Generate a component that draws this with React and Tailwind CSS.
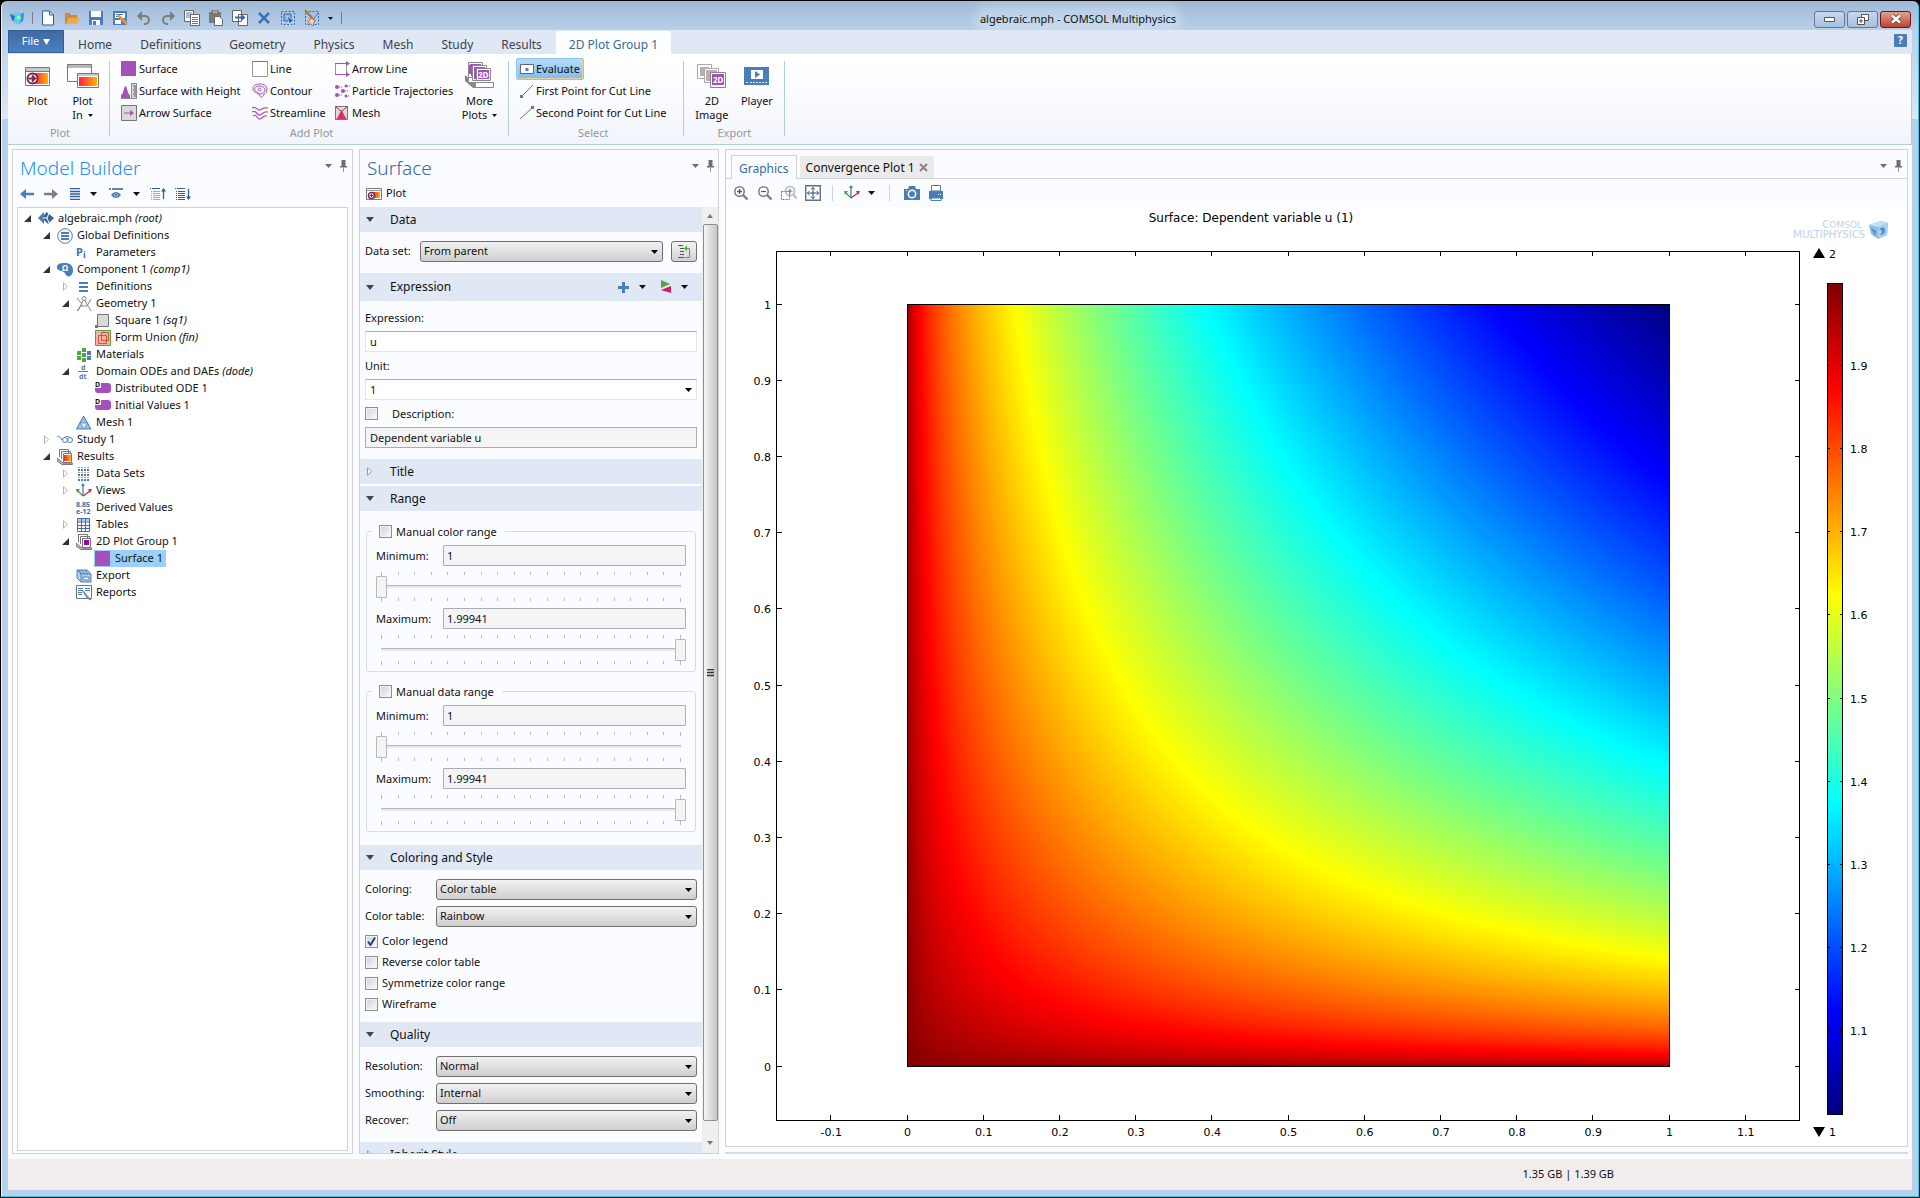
import React from "react";

/* ---------- colour map and surface geometry ---------- */

const STOPS = [
  [0, 0, 0, 128],
  [0.125, 0, 0, 255],
  [0.375, 0, 255, 255],
  [0.625, 255, 255, 0],
  [0.875, 255, 0, 0],
  [1, 128, 0, 0],
];

function rainbow(t) {
  let i = 0;
  while (i < STOPS.length - 2 && t > STOPS[i + 1][0]) i++;
  const [a, ...ca] = STOPS[i];
  const [b, ...cb] = STOPS[i + 1];
  const k = (t - a) / (b - a);
  return "rgb(" + ca.map((c, j) => Math.round(c + (cb[j] - c) * k)).join(",") + ")";
}

const X0 = 907.5, X1 = 1669.5, Y0 = 1066.5, Y1 = 304.5;
const px = (x) => X0 + (X1 - X0) * x;
const py = (y) => Y0 - (Y0 - Y1) * y;

// Region where u = 2 - sqrt(xy) lies below a level, bounded by a hyperbola.
function levelPath(c) {
  const n = 48;
  const pts = [];
  for (let i = 0; i <= n; i++) {
    const x = Math.pow(c, 1 - i / n);
    pts.push(px(x).toFixed(2) + " " + py(c / x).toFixed(2));
  }
  return "M" + pts.join("L") + "L" + px(1) + " " + py(1) + "Z";
}

const LEVELS = Array.from({ length: 320 }, (_, i) => {
  const t = 1 - (i + 1) / 321;
  return { d: levelPath((1 - t) * (1 - t)), fill: rainbow(t) };
});

const tenth = (i) => String(Math.round(i) / 10);

function SurfacePlot() {
  const xs = Array.from({ length: 13 }, (_, i) => i - 1);
  const ys = Array.from({ length: 11 }, (_, i) => i);
  const ls = Array.from({ length: 9 }, (_, i) => i + 11);
  return (
    <svg viewBox="726 207 1181 939" className="block min-h-0 w-full flex-1 bg-white font-['DejaVu_Sans',sans-serif] text-[11px]" role="img" aria-label="Surface plot">
      <defs>
        <linearGradient id="legend" x1="0" y1="1" x2="0" y2="0">
          {STOPS.map((s) => <stop key={s[0]} offset={s[0]} stopColor={rainbow(s[0])} />)}
        </linearGradient>
      </defs>
      <text x="1251" y="222" textAnchor="middle" className="text-[12px]">Surface: Dependent variable u (1)</text>
      <rect x={X0} y={Y1} width={X1 - X0} height={Y0 - Y1} fill="rgb(136,0,0)" />
      {LEVELS.map((l) => <path key={l.fill + l.d.length + l.d.slice(0, 24)} d={l.d} fill={l.fill} />)}
      <g fill="none" stroke="#000">
        <rect x={X0} y={Y1} width={X1 - X0} height={Y0 - Y1} />
        <rect x="776.5" y="251.5" width="1023" height="869" />
        {xs.map((i) => {
          const x = Math.round(X0 + 76.2 * i) - 0.5;
          return <path key={i} d={`M${x} 251v5M${x} 1121v-6`} />;
        })}
        {ys.map((i) => {
          const y = Math.round(Y0 - 76.2 * i) - 0.5;
          return <path key={i} d={`M776 ${y}h6M1800 ${y}h-5`} />;
        })}
        <rect x="1827.5" y="283.5" width="15" height="831" fill="url(#legend)" />
        {ls.map((i) => {
          const y = Math.round(1114.5 - 83.2 * (i - 10)) - 0.5;
          return <path key={i} d={`M1828 ${y}h2M1842 ${y}h-2`} />;
        })}
      </g>
      {xs.map((i) => <text key={i} x={X0 + 76.2 * i} y="1136" textAnchor="middle">{tenth(i)}</text>)}
      {ys.map((i) => <text key={i} x="771" y={Y0 - 76.2 * i + 4} textAnchor="end">{tenth(i)}</text>)}
      {ls.map((i) => <text key={i} x="1850" y={1118.5 - 83.2 * (i - 10)}>{tenth(i)}</text>)}
      <path d="M1819 248l6 10h-12z" />
      <text x="1829" y="258">2</text>
      <path d="M1819 1137l6-10h-12z" />
      <text x="1829" y="1136">1</text>
      <g fill="#bcd3ec">
        <text x="1862" y="228" textAnchor="end" className="text-[10px]">C<tspan className="text-[9px]">OMSOL</tspan></text>
        <text x="1865" y="238" textAnchor="end" className="text-[11px]">M<tspan className="text-[10px]">ULTIPHYSICS</tspan></text>
        <path d="M1869 225l12-4 7 2-1 12-9 4-7-5z" fill="#8dbce4" />
        <path d="M1869 225l9 2 10-4-7-2z" fill="#c6dff4" />
        <path d="M1878 227l10-4-1 12-9 4z" fill="#a9cfee" />
        <path d="M1871 228l5 3-1 5zM1879 229q6-4 6 1t-5 5q3-3 1-5z" fill="#4c8fc9" />
      </g>
    </svg>
  );
}

/* ---------- icons ---------- */

const B = "#4a7ebb", P = "#a551bb", G = "#7f7f7f";

function Svg({ w = 16, h = 16, children }) {
  return <svg width={w} height={h} viewBox={`0 0 ${w} ${h}`} fill="none" className="block shrink-0" aria-hidden="true">{children}</svg>;
}

const Caret = ({ color = "#111" }) => <Svg w={7} h={4}><path d="M0 0h7L3.500 4z" fill={color} /></Svg>;
const Pin = () => <Svg w={7} h={12}><path d="M1.500 0h4v6H7v1.500H0V6h1.500z" fill="#6e6e6e" /><path d="M3.500 7v5" stroke="#999" /></Svg>;

const icons = {
  app: <Svg><path d="M1 4l7-2 7 1-1 8-5 4-6-4z" fill="#7cc0ea" /><path d="M1 4l5 2-1 5-2-1z" fill="#2d6fb5" /><path d="M12 4l3-1-1 8-3 2z" fill="#3f8ccb" /><circle cx="9" cy="8" r="3.500" fill="#2fe3f0" /><circle cx="9.500" cy="7.500" r="1.700" fill="#c9ef6b" /></Svg>,
  newFile: <Svg><path d="M2.500 1h7l4 4v10h-11z" fill="#fff" stroke="#2f5f9e" /><path d="M9.500 1v4h4" stroke="#2f5f9e" /></Svg>,
  open: <Svg><path d="M1 3h5l1 2h6v3H5l-3 6H1z" fill="#cf8a36" /><path d="M4.500 8H16l-3.500 6H1.500z" fill="#f0a94e" /></Svg>,
  save: <Svg><path d="M1 1h14v14H1z" fill={B} /><path d="M3 1h10v6H3zM4 10h8v5H4z" fill="#fff" /><path d="M5 11h3v4H5z" fill={B} /></Svg>,
  saveAs: <Svg><path d="M1 1h14v14H1z" fill={B} /><path d="M3 3h10v5H3zM3 10h6v4H3z" fill="#fff" /><path d="M4 4.500h7M4 6.500h5" stroke={B} /><path d="M6 5l9 9" stroke="#e8973a" strokeWidth="2.500" /></Svg>,
  undo: <Svg><path d="M3 6h6a4 4 0 010 8H8" stroke="#7c7c7c" strokeWidth="2" /><path d="M6 1L1 6l5 5z" fill="#7c7c7c" /></Svg>,
  redo: <Svg><path d="M13 6H7a4 4 0 000 8h1" stroke="#7c7c7c" strokeWidth="2" /><path d="M10 1l5 5-5 5z" fill="#7c7c7c" /></Svg>,
  copy: <Svg><path d="M.5.500h9v11h-9z" fill="#fff" stroke="#666" /><path d="M2 3h6M2 5h6M2 7h6" stroke={B} /><path d="M6.500 4.500h9v11h-9z" fill="#fff" stroke="#666" /><path d="M8 7.500h6M8 9.500h6M8 11.500h6M8 13.500h6" stroke={B} /></Svg>,
  paste: <Svg><path d="M1 2h12v11H1z" fill="#7b7b7b" /><path d="M4 0h6v4H4z" fill="#a8a8a8" stroke="#666" /><path d="M6.500 6.500h5l3 3v6h-8z" fill="#fff" stroke="#666" /></Svg>,
  duplicate: <Svg><path d="M.5.500h9v11h-9zM6.500 4.500h9v11h-9z" fill="#fff" stroke="#666" /><path d="M3 7.500h8" stroke="#2f6db8" strokeWidth="2" /><path d="M9.500 4l4 3.500-4 3.500z" fill="#2f6db8" /></Svg>,
  del: <Svg><path d="M3 3l10 10M13 3L3 13" stroke="#3c72b3" strokeWidth="2.500" /></Svg>,
  select: <Svg><path d="M1.500 1.500h13v13h-13z" stroke="#2f6db8" strokeDasharray="2 1.500" /><path d="M4 4h7v7H4z" fill="#8fb6de" stroke="#2f6db8" /><path d="M7 6l7 5-3 1-1 3z" fill="#1f5aa0" stroke="#fff" strokeWidth=".5" /></Svg>,
  clear: <Svg><path d="M1.500 1.500h13v13h-13z" stroke="#2f6db8" strokeDasharray="2 1.500" /><path d="M1 0l8 9" stroke="#b1703a" strokeWidth="2" /><path d="M7 8l4 2-2 6-5-4z" fill="#e9d5c0" stroke="#b1703a" /><path d="M14 3l-5 7" stroke={B} /></Svg>,
  plot: <Svg w={25} h={19}><path d="M.5.500h24v18H.500z" fill="#fff" stroke="#777" /><path d="M1 1h23v3H1z" fill="#c9c9c9" /><path d="M1 4.500h23" stroke="#777" /><path d="M9 6h14v11H9z" fill="url(#heat)" /><circle cx="7.500" cy="11.500" r="5" fill="#fff" stroke="#7a2450" strokeWidth="2" /><path d="M4 11.500h5M7 8.500l3 3-3 3" stroke="#7a2450" strokeWidth="2" /></Svg>,
  plotSmall: <Svg w={16} h={12}><path d="M.5.500h15v11H.500z" fill="#fff" stroke="#777" /><path d="M1 2.500h14" stroke="#999" /><path d="M7 4h7v6H7z" fill="url(#heat)" /><circle cx="5.500" cy="7.500" r="3" fill="#fff" stroke="#7a2450" strokeWidth="1.500" /><path d="M4 7.500h3.500M5.500 6v3" stroke="#7a2450" /></Svg>,
  plotIn: <Svg w={32} h={24}><path d="M.5.500h24v17H.500z" fill="#fff" stroke="#777" /><path d="M1 1h23v3H1z" fill="#b9b9b9" /><path d="M10.500 9.500h21v14h-21z" fill="#fff" stroke="#777" /><path d="M11 10h20v2H11z" fill="#c9c9c9" /><path d="M12 13h18v9H12z" fill="url(#heat)" /></Svg>,
  surface: <Svg><path d="M0 0h15v15H0z" fill={P} /></Svg>,
  surfaceHeight: <Svg><path d="M0 15v-3c2-1 2-3 3-6 1-4 2-4 3 0 1 3 1 5 3 6v3z" fill={P} /><path d="M0 15.500h16" stroke="#888" /><path d="M10.500.500h5v15h-5z" fill="#ddd" stroke="#888" /><path d="M12 3h3M13 5h2M12 7h3M13 9h2M12 11h3M13 13h2" stroke="#555" /></Svg>,
  arrowSurface: <Svg><path d="M.5.500h15v15H.500z" fill="#d9d9d9" stroke="#777" /><path d="M3 8h8" stroke={P} /><path d="M9 5l4 3-4 3z" fill={P} /></Svg>,
  line: <Svg><path d="M.5.500h15v15H.500z" fill="#fff" stroke="#999" /><path d="M.5 0v.500h15" stroke={P} /></Svg>,
  contour: <Svg><path d="M8 1c4 0 7 2 7 5s-1 4-3 5c-1 3-3 4-4 2 0-3-7-3-7-7s3-5 7-5z" stroke={P} /><path d="M7 3c3 0 6 1 6 4s-3 3-4 4-5-2-6-4 1-4 4-4z" stroke={P} /><circle cx="7.500" cy="6.500" r="1.500" stroke={P} /></Svg>,
  streamline: <Svg><path d="M0 3c4-3 5 3 8 2s3-3 8-2M0 7c4-3 5 4 8 3s3-4 8-3M1 11c4-3 4 4 7 3s3-4 7-3" stroke={P} strokeWidth="1.200" /></Svg>,
  arrowLine: <Svg><path d="M1.500 2.500h11v11h-11z" fill="#fff" stroke="#999" /><path d="M1 2.500h12M1 13.500h12" stroke={P} /><path d="M12 0l4 2.500L12 5zM12 11l4 2.500-4 2.500z" fill={P} /></Svg>,
  particle: <Svg><g fill={P}><circle cx="3" cy="4" r="2" /><circle cx="9" cy="8" r="2" /><circle cx="3" cy="12" r="2" /><circle cx="12" cy="3" r="1.500" /><circle cx="12" cy="13" r="1.500" /></g><path d="M5 4h3M11 8h3M5 12h3M13 3h3M14 13h2" stroke={P} strokeDasharray="1 1" /></Svg>,
  mesh: <Svg><path d="M1.500 1.500h12v13h-12z" fill="#ddd" stroke="#777" /><path d="M7.500 5l5 9h-10z" fill="#e6336b" /><path d="M1.500 1.500l6 5 6-5M7.500 6v8" stroke="#b02a55" /></Svg>,
  morePlots: <Svg w={30} h={28}><path d="M0 13l4 3v4h6v6H8l-8-7z" fill="#8a8a8a" /><path d="M3.500.500h14v15h-14z" fill="#fff" stroke="#888" /><path d="M5 2h11v3H5z" fill={P} /><path d="M5 3v9M7 5v9" stroke={P} strokeWidth="2" /><path d="M7.500 3.500h14v15h-14z" fill="#fff" stroke="#888" /><path d="M9 5h11v12H9z" fill={P} /><path d="M11.500 6.500h14v12h-14z" fill="#fff" stroke="#888" /><path d="M13 8h11v9H13z" fill={P} /><text x="13" y="16" fill="#fff" className="text-[8px] font-bold">2D</text><path d="M10.500 20.500h18v5h-18z" fill="#fff" stroke="#888" /></Svg>,
  image2d: <Svg w={30} h={24}><path d="M.5.500h14v14H.500z" fill="#fff" stroke="#b5a5ab" /><path d="M3 3h9v9H3z" fill="#b2b2b2" /><path d="M7.500 4.500h14v14h-14z" fill="#fff" stroke="#b5a5ab" /><path d="M9 6h11v11H9z" fill="#b2b2b2" /><path d="M13.500 8.500h15v15h-15z" fill="#fff" stroke="#888" /><path d="M15 10h12v11H15z" fill={P} /><text x="16" y="19" fill="#fff" className="text-[8px] font-bold">2D</text></Svg>,
  player: <Svg w={25} h={18}><path d="M0 0h25v18H0z" fill={B} /><path d="M7 3h12v9H7z" fill="#fff" /><path d="M11 4l5 3.500-5 3.500z" fill={B} /><path d="M2 15.500h3M6 15.500h17" stroke="#dbe7f4" strokeDasharray="2 1" /></Svg>,
  evaluate: <Svg w={14} h={12}><path d="M.5 1.500h13v9H.500z" fill="#fff" stroke="#666" /><path d="M5.500 5h3v3h-3z" fill={B} /></Svg>,
  firstPoint: <Svg w={14} h={14}><path d="M2 12L13 1" stroke="#777" /><path d="M0 11h3v3H0z" fill={B} /></Svg>,
  secondPoint: <Svg w={14} h={14}><path d="M0 13L12 2" stroke="#777" /><path d="M11 0h3v3h-3z" fill={B} /></Svg>,
  back: <Svg w={14} h={10}><path d="M4 5h10" stroke={B} strokeWidth="2.500" /><path d="M6 0v10L0 5z" fill={B} /></Svg>,
  forward: <Svg w={14} h={10}><path d="M0 5h10" stroke={G} strokeWidth="2.500" /><path d="M8 0v10l6-5z" fill={G} /></Svg>,
  list: <Svg w={10} h={12}><path d="M0 .5h10M0 3.500h10M0 6h10M0 8.500h10M0 11.500h10" stroke="#2f5f9e" strokeWidth="1.300" /></Svg>,
  eye: <Svg w={14} h={12}><path d="M0 1h2M3 1h11" stroke="#2f5f9e" strokeWidth="1.500" /><path d="M2 7c3-4 7-4 10 0-3 4-7 4-10 0z" fill={B} /><circle cx="7" cy="7" r="1.600" fill="#fff" /><circle cx="7" cy="7" r=".9" fill="#24477a" /></Svg>,
  collapse: <Svg w={16} h={12}><path d="M0 .5h1M2 .5h8" stroke="#2f5f9e" /><path d="M1 3.500h1M3 3.500h7M1 5.500h1M3 5.500h7M1 7.500h1M3 7.500h7M1 9.500h1M3 9.500h7M1 11.500h1M3 11.500h7" stroke="#aaa" /><path d="M13.500 1v10" stroke="#2f5f9e" strokeWidth="1.300" /><path d="M11 3.500L13.500 0 16 3.500z" fill="#2f5f9e" /></Svg>,
  expand: <Svg w={16} h={12}><path d="M0 .5h1M2 .5h8M1 3.500h1M3 3.500h7M1 5.500h1M3 5.500h7M1 7.500h1M3 7.500h7M1 9.500h1M3 9.500h7M1 11.500h1M3 11.500h7" stroke="#2f5f9e" /><path d="M13.500 1v10" stroke="#2f5f9e" strokeWidth="1.300" /><path d="M11 8.500l2.500 3.500L16 8.500z" fill="#2f5f9e" /></Svg>,
  root: <Svg><path d="M6 1l-6 6 6 6z" fill={B} /><path d="M8.500 1L16 7l-6 6-6-6z" fill="#3a649f" /><path d="M4.500 7H9M9 7l2-5M9 7l2 5" stroke="#fff" /></Svg>,
  globalDefs: <Svg><circle cx="8" cy="8" r="7.300" fill="#fff" stroke={B} /><path d="M4 5h8M4 8h8M4 11h8" stroke={B} strokeWidth="1.800" /></Svg>,
  params: <Svg><text x="0" y="11" fill="#3f6cab" className="text-[11px] font-bold">P</text><text x="7" y="13" fill="#3f6cab" className="text-[9px] font-bold">i</text></Svg>,
  component: <Svg><path d="M0 5c0-4 5-4 8-4s8 1 8 7-5 8-7 5-1-3-5-4-4-3-4-4z" fill={B} /><text x="5" y="9" fill="#fff" className="text-[8px] font-bold">Ω</text></Svg>,
  definitions: <Svg><path d="M3 4h9M3 8h9M3 12h9" stroke={B} strokeWidth="2" /></Svg>,
  geometry: <Svg><path d="M1 2l5 6-5 7M7.500 4L2 15M8.500 4L15 15M4 10h7L15 3" stroke="#888" /><circle cx="8" cy="2.500" r="2" fill="#fff" stroke="#888" /></Svg>,
  square: <Svg><path d="M2.500 1.500h11v12h-11z" fill="#d9d9d9" stroke="#777" /><path d="M0 12h3v3H0z" fill="#c5573f" /></Svg>,
  union: <Svg><path d="M.5.500h15v15H.500z" fill="#eeb4a4" stroke="#4fa63f" /><path d="M3.500 5.500h8v8h-8zM6.500 2.500h7v8h-7z" stroke="#d4553b" /></Svg>,
  materials: <Svg><g fill="#53a447"><path d="M1 4h4v4H1zM1 9h4v4H1zM6 1h4v4H6zM6 6h4v4H6zM6 11h4v4H6z" /></g><path d="M11 4h4v4h-4zM11 9h4v4h-4z" fill={B} /></Svg>,
  ddt: <Svg><text x="5" y="6" fill={B} className="text-[7px] font-bold">d</text><path d="M2 7.500h10" stroke={B} /><text x="3" y="15" fill={B} className="text-[7px] font-bold">dt</text></Svg>,
  ode: <Svg><path d="M6 2h7q3 0 3 3v4q0 3-3 3H3q-3 0-3-3V7h6z" fill={P} /><text x="0" y="6" fill="#111" className="text-[7px] font-bold">D</text></Svg>,
  meshTri: <Svg><path d="M7.500 1L15 14H.500z" fill="#9fbfe0" stroke={B} /><path d="M4 8h7.500L8 14z" fill="#dfeaf5" stroke={B} strokeWidth=".7" /></Svg>,
  study: <Svg><path d="M0 5c2-2 3 0 5 3" stroke={B} /><circle cx="8" cy="8" r="2.500" stroke={B} /><circle cx="13" cy="8" r="2.500" stroke={B} /><path d="M8 5.500c2-2 4-1 5 0" stroke={B} /></Svg>,
  results: <Svg><path d="M2.500 8V.500h9V4M4.500 10V2.500h9V4" stroke="#777" /><path d="M6.500 4.500h8v9h-8z" fill="#fff" stroke="#777" /><path d="M7 6h7v6H7z" fill="url(#heat)" /><path d="M0 9l6 5h9.500v1.500H5L0 12z" fill="#bbb" stroke="#777" /></Svg>,
  plotGroup: <Svg><path d="M2.500 8V.500h9V4M4.500 10V2.500h9V4" stroke="#777" /><path d="M6.500 4.500h8v9h-8z" fill="#fff" stroke="#777" /><path d="M8 6h5v5H8z" fill="#a000a8" /><path d="M0 9l6 5h9.500v1.500H5L0 12z" fill="#bbb" stroke="#777" /></Svg>,
  dataSets: <Svg><path d="M2 1.500h12M2 6.500h12M2 11.500h12" stroke="#aaa" strokeDasharray="2 1" /><path d="M2 4h12M2 9h12M2 14h12" stroke={B} strokeWidth="2" strokeDasharray="2 1" /></Svg>,
  views: <Svg><path d="M7 1v12" stroke={B} strokeWidth="1.300" /><path d="M7 13L2 8" stroke="#4a9e3b" strokeWidth="1.300" /><path d="M7 13l7-5" stroke="#d4224f" strokeWidth="1.300" /><path d="M5 3l2-3 2 3z" fill={B} /><path d="M0 6l4 0-3 4z" fill="#4a9e3b" /><path d="M12 6h4l-2 4z" fill="#d4224f" /></Svg>,
  derived: <Svg><text x="0" y="7" fill="#3f6cab" className="text-[7px] font-bold">8.85</text><text x="0" y="14" fill="#3f6cab" className="text-[7px] font-bold">e-12</text></Svg>,
  tables: <Svg><path d="M1.500 1.500h12v13h-12z" fill="#fff" stroke="#3f6cab" /><path d="M2 2h11v2.500H2z" fill="#b7cfe8" /><path d="M1 5h13M1 8.500h13M1 11.500h13M5.500 1v14M9.500 1v14" stroke="#3f6cab" /></Svg>,
  exportIcon: <Svg><path d="M1 2h10l4 4v8H5L1 10z" fill="#b7cfe8" stroke={B} /><path d="M5 6h10M5 6v8M1 2l4 4M3 2l3 4M6 2l3 4M9 2l3 4" stroke={B} /><path d="M7 9h6v3H7z" fill="#fff" stroke={B} /></Svg>,
  reports: <Svg><path d="M.5.500h15v13H.500z" fill="#fff" stroke="#777" /><path d="M2 3.500h5M2 5.500h5M2 7.500h4M2 9.500h4M9 3.500h5M9 5.500h5" stroke={B} /><path d="M7 6l8 9-4-2z" fill="#9fbfe0" stroke={B} /></Svg>,
  zoomIn: <Svg><circle cx="6.500" cy="6.500" r="4.700" fill="#fff" stroke={G} strokeWidth="1.600" /><path d="M10 10l4.500 4.500" stroke={G} strokeWidth="2.400" /><path d="M4 6.500h5M6.500 4v5" stroke="#2f5f9e" strokeWidth="1.300" /></Svg>,
  zoomOut: <Svg><circle cx="6.500" cy="6.500" r="4.700" fill="#fff" stroke={G} strokeWidth="1.600" /><path d="M10 10l4.500 4.500" stroke={G} strokeWidth="2.400" /><path d="M4 6.500h5" stroke="#2f5f9e" strokeWidth="1.300" /></Svg>,
  zoomBox: <Svg><circle cx="9" cy="6" r="4.500" fill="#fff" stroke="#b8b8b8" strokeWidth="1.600" /><path d="M12.500 9.500l3 4" stroke="#b8b8b8" strokeWidth="2" /><path d="M.5 6.500h8v8h-8z" stroke={B} strokeDasharray="2 1" /><path d="M6.500 6h5M9 3.500v5" stroke={B} /></Svg>,
  extents: <Svg><path d="M.7.700h14.600v14.600H.700z" fill="#fff" stroke="#6e6e6e" strokeWidth="1.400" /><path d="M5 8h6M8 5v6" stroke="#444" /><path d="M8 1.500l2.500 3h-5zM8 14.500l2.500-3h-5zM1.500 8l3-2.500v5zM14.500 8l-3-2.500v5z" fill={B} /></Svg>,
  camera: <Svg><path d="M0 4h4l1-3h6l1 3h4v11H0z" fill={B} /><circle cx="8" cy="9" r="3.700" fill={B} stroke="#fff" strokeWidth="1.500" /><path d="M2 5.500h1" stroke="#fff" /></Svg>,
  print: <Svg><path d="M3.500.500h9V6h-9z" fill="#fff" stroke={B} /><path d="M1 6h14v8H1z" fill={B} /><path d="M3 13h10v2.500H3z" fill="#fff" stroke={B} /><path d="M10 9.500h1M12 9.500h1" stroke="#fff" /></Svg>,
  plus: <Svg w={11} h={11}><path d="M5.500 0v11M0 5.500h11" stroke={B} strokeWidth="3" /></Svg>,
  swap: <Svg w={10} h={14}><path d="M0 0l9 4-9 4z" fill="#4fa63f" /><path d="M10 6v7L0 10z" fill="#d81b60" /></Svg>,
  goto: <Svg w={14} h={15}><path d="M1 1.500h5M3 4.500h4M3 7.500h4M3 10.500h4M1 13.500h6" stroke="#555" /><path d="M8 13.500h4.500v-9H9" stroke="#53a447" /><path d="M7 4.500l3-3v6z" fill="#53a447" /></Svg>,
};

/* ---------- window chrome ---------- */

function IconButton({ label, icon, className = "" }) {
  return <button type="button" aria-label={label} className={"flex shrink-0 items-center justify-center " + className}>{icon}</button>;
}

function TitleBar() {
  const quick = [["New", "newFile"], ["Open", "open"], ["Save", "save"], ["Save as", "saveAs"], ["Undo", "undo"], ["Redo", "redo"], ["Copy", "copy"], ["Paste", "paste"], ["Duplicate", "duplicate"], ["Delete", "del"], ["Select", "select"], ["Clear selection", "clear"]];
  const ctl = "flex h-[17px] w-[31px] items-center justify-center rounded-[3px] border";
  return (
    <header className="flex h-[29px] items-center">
      <div className="flex items-center gap-2 pl-[1px] pt-[5px]">
        {icons.app}
        <span className="-mx-px h-3 w-px bg-[#6f8096]" />
        {quick.map(([l, i]) => <IconButton key={l} label={l} icon={icons[i]} />)}
        <IconButton label="Customize" icon={<Svg w={5} h={3}><path d="M0 0h5L2.500 3z" fill="#111" /></Svg>} />
        <span className="h-3 w-px bg-[#6f8096]" />
      </div>
      <h1 className="flex flex-1 justify-center pt-[5px] leading-[17px]">
        <span className="rounded-full bg-white/25 shadow-[0_0_8px_6px_rgba(255,255,255,0.25)]">algebraic.mph - COMSOL Multiphysics</span>
      </h1>
      <div className="flex justify-end gap-[2px] pr-[1px] pt-[7px]">
        <button type="button" aria-label="Minimize" className={ctl + " border-[#6d6f9c] bg-linear-to-b from-[#c6d8ee] to-[#a6c1de]"}><Svg w={11} h={5}><path d="M.5.500h10v4H.500z" fill="#fff" stroke="#555" /></Svg></button>
        <button type="button" aria-label="Restore" className={ctl + " border-[#6d6f9c] bg-linear-to-b from-[#c6d8ee] to-[#a6c1de]"}><Svg w={12} h={11}><path d="M4.500.500h7v6h-7z" fill="#fff" stroke="#555" /><path d="M.5 3.500h7v7h-7z" fill="#fff" stroke="#555" /><path d="M3 6h2v2H3z" stroke="#555" /></Svg></button>
        <button type="button" aria-label="Close" className={ctl + " border-[#6b1626] bg-linear-to-b from-[#e7a08f] to-[#b9432b]"}><Svg w={12} h={10}><path d="M2 1.500l8 7M10 1.500l-8 7" stroke="#444" strokeWidth="4" /><path d="M2 1.500l8 7M10 1.500l-8 7" stroke="#fff" strokeWidth="2.500" /></Svg></button>
      </div>
    </header>
  );
}

function TabBar() {
  return (
    <nav className="flex h-6 items-end bg-[#dfe8f4] text-[12px] text-[#3f4248]">
      <button type="button" className="flex h-[23px] w-[56px] items-center justify-center gap-1 self-start border border-[#2f5c9b] bg-linear-to-b from-[#41699f] to-[#4a80c4] text-[11px] text-white">
        File <Svg w={7} h={6}><path d="M0 0h7L3.500 6z" fill="#fff" /></Svg>
      </button>
      <div className="flex flex-1">
        {["Home", "Definitions", "Geometry", "Physics", "Mesh", "Study", "Results"].map((t) => <button key={t} type="button" className="h-[23px] px-[14px] pb-[2px] pt-[6px] leading-[15px]">{t}</button>)}
        <button type="button" className="h-[23px] rounded-t-[4px] bg-[#fdfeff] px-[13px] pb-[2px] pt-[6px] leading-[15px] text-[#39699f]">2D Plot Group 1</button>
      </div>
      <button type="button" aria-label="Help" className="mb-[7px] mr-[5px] flex h-[13px] w-[13px] items-center justify-center rounded-[1px] bg-[#4a7ebb] text-[10px] font-bold text-white">?</button>
    </nav>
  );
}

function RibbonGroup({ label, className, children }) {
  return (
    <section className="flex">
      <div className={"flex flex-col pt-1 " + className}>
        <div className="flex h-[66px]">{children}</div>
        <h2 className="text-center leading-[17px] text-[#969696]">{label}</h2>
      </div>
      <div className="mt-[7px] h-[75px] w-px bg-[#b4cade]" />
    </section>
  );
}

function BigButton({ icon, lines, caret }) {
  return (
    <button type="button" className="flex w-[45px] flex-col items-center leading-[14px]">
      <span className="flex h-9 shrink-0 items-center justify-center">{icons[icon]}</span>
      <span>{lines[0]}</span>
      {lines[1] && <span className="flex items-center gap-[5px] whitespace-nowrap">{lines[1]}{caret && <Svg w={5} h={3}><path d="M0 0h5L2.500 3z" fill="#111" /></Svg>}</span>}
    </button>
  );
}

function SmallButton({ icon, children, className = "" }) {
  return <button type="button" className={"flex h-[22px] items-center gap-[2px] whitespace-nowrap text-left " + className}>{icons[icon]}<span>{children}</span></button>;
}

function Ribbon() {
  return (
    <div className="flex h-[91px] border-b border-r border-[#b4cade] bg-linear-to-b from-white via-[#fafbfe] to-[#f1f5fb]">
      <RibbonGroup label="Plot" className="pl-[7px] pr-[4px]">
        <BigButton icon="plot" lines={["Plot"]} />
        <BigButton icon="plotIn" lines={["Plot", "In"]} caret />
      </RibbonGroup>
      <RibbonGroup label="Add Plot" className="pl-[11px] pr-[6px]">
        <div className="grid grid-flow-col grid-cols-[131px_82px_123px] grid-rows-3">
          <SmallButton icon="surface">Surface</SmallButton>
          <SmallButton icon="surfaceHeight">Surface with Height</SmallButton>
          <SmallButton icon="arrowSurface">Arrow Surface</SmallButton>
          <SmallButton icon="line">Line</SmallButton>
          <SmallButton icon="contour">Contour</SmallButton>
          <SmallButton icon="streamline">Streamline</SmallButton>
          <SmallButton icon="arrowLine">Arrow Line</SmallButton>
          <SmallButton icon="particle">Particle Trajectories</SmallButton>
          <SmallButton icon="mesh">Mesh</SmallButton>
        </div>
        <BigButton icon="morePlots" lines={["More", "Plots"]} caret />
      </RibbonGroup>
      <RibbonGroup label="Select" className="pl-[7px] pr-[13px]">
        <div className="flex flex-col items-start">
          <SmallButton icon="evaluate" className="rounded-[2px] border border-[#8cc5ee] bg-linear-to-b from-[#b9dcf8] to-[#7cbcf2] px-[3px] outline outline-offset-[-2px] outline-[#e9cf9b]">Evaluate</SmallButton>
          <SmallButton icon="firstPoint" className="px-1">First Point for Cut Line</SmallButton>
          <SmallButton icon="secondPoint" className="px-1">Second Point for Cut Line</SmallButton>
        </div>
      </RibbonGroup>
      <RibbonGroup label="Export" className="px-[5px]">
        <BigButton icon="image2d" lines={["2D", "Image"]} />
        <BigButton icon="player" lines={["Player"]} />
      </RibbonGroup>
    </div>
  );
}

function PanelButtons() {
  return <div className="flex items-center gap-2"><IconButton label="Panel menu" icon={<Caret color="#6e6e6e" />} /><IconButton label="Pin panel" icon={<Pin />} /></div>;
}

/* ---------- model tree ---------- */

const tree = [
  { t: "algebraic.mph", n: "root", i: "root", c: [
    { t: "Global Definitions", i: "globalDefs", c: [{ t: "Parameters", i: "params" }] },
    { t: "Component 1", n: "comp1", i: "component", c: [
      { t: "Definitions", i: "definitions", closed: true },
      { t: "Geometry 1", i: "geometry", c: [{ t: "Square 1", n: "sq1", i: "square" }, { t: "Form Union", n: "fin", i: "union" }] },
      { t: "Materials", i: "materials" },
      { t: "Domain ODEs and DAEs", n: "dode", i: "ddt", c: [{ t: "Distributed ODE 1", i: "ode" }, { t: "Initial Values 1", i: "ode" }] },
      { t: "Mesh 1", i: "meshTri" },
    ] },
    { t: "Study 1", i: "study", closed: true },
    { t: "Results", i: "results", c: [
      { t: "Data Sets", i: "dataSets", closed: true },
      { t: "Views", i: "views", closed: true },
      { t: "Derived Values", i: "derived" },
      { t: "Tables", i: "tables", closed: true },
      { t: "2D Plot Group 1", i: "plotGroup", c: [{ t: "Surface 1", i: "surface", sel: true }] },
      { t: "Export", i: "exportIcon" },
      { t: "Reports", i: "reports" },
    ] },
  ] },
];

function TreeNode({ node }) {
  return (
    <li role="treeitem" aria-expanded={!!node.c} aria-selected={!!node.sel}>
      <div className="flex h-[17px] items-center whitespace-nowrap">
        <span className="flex w-[13px] shrink-0 justify-start">
          {node.c && <Svg w={7} h={7}><path d="M7 0v7H0z" fill="#333" /></Svg>}
          {node.closed && <Svg w={7} h={9}><path d="M1.500.800L5.500 4.500l-4 3.700z" fill="#fff" stroke="#b5b5b5" /></Svg>}
        </span>
        <span className={node.sel ? "flex h-[17px] items-center gap-[4px] bg-[#99d1fb] pl-[1px] pr-[3px]" : "flex items-center gap-[4px] pl-[1px]"}>
          {icons[node.i]}
          <span>{node.t}{node.n && <i> ({node.n})</i>}</span>
        </span>
      </div>
      {node.c && <ul role="group" className="pl-[19px]">{node.c.map((n) => <TreeNode key={n.t} node={n} />)}</ul>}
    </li>
  );
}

function ModelBuilder() {
  return (
    <section className="flex w-[341px] shrink-0 flex-col border border-[#d0d2d6] px-1 pb-[2px]">
      <div className="flex h-8 items-center justify-between pl-[3px] pr-px">
        <h2 className="pt-[5px] text-[19px] font-light text-[#1e93ea]">Model Builder</h2>
        <PanelButtons />
      </div>
      <div className="flex h-[25px] items-center gap-[10px] pb-[2px] pl-[3px]">
        <IconButton label="Back" icon={icons.back} />
        <IconButton label="Forward" icon={icons.forward} />
        <IconButton label="Show list" icon={icons.list} className="ml-[2px]" />
        <IconButton label="List options" icon={<Caret />} className="mr-[2px]" />
        <IconButton label="Show" icon={icons.eye} />
        <IconButton label="Show options" icon={<Caret />} />
        <IconButton label="Collapse all" icon={icons.collapse} />
        <IconButton label="Expand all" icon={icons.expand} className="-ml-px" />
      </div>
      <ul role="tree" className="min-h-0 flex-1 overflow-hidden border border-[#d0d2d6] bg-white pl-[6px] pt-[2px]">
        {tree.map((n) => <TreeNode key={n.t} node={n} />)}
      </ul>
    </section>
  );
}

/* ---------- settings form ---------- */

function SectionHeader({ title, closed, tall, children }) {
  return (
    <div className={(tall ? "h-7" : "h-[25px]") + " flex shrink-0 items-center bg-[#dfe8f4] px-[6px] text-[12px]"}>
      <button type="button" className="flex flex-1 items-center">
        <span className="w-6">{closed ? <Svg w={7} h={9}><path d="M1.500.800L5.500 4.500l-4 3.700z" fill="#fff" stroke="#999" /></Svg> : <Svg w={8} h={5}><path d="M0 0h8L4 5z" fill="#444" /></Svg>}</span>
        <span>{title}</span>
      </button>
      {children}
    </div>
  );
}

function Select({ id, value, plain, children }) {
  return (
    <span className="relative flex min-w-0 flex-1">
      <select id={id} defaultValue={value} className={plain
        ? "h-[21px] w-full appearance-none border border-[#e1e5ec] border-t-[#abadb3] bg-white px-1"
        : "h-[21px] w-full appearance-none rounded-[3px] border border-[#707070] bg-linear-to-b from-[#f2f2f2] to-[#cfcfcf] px-[3px]"}>
        <option>{value}</option>
      </select>
      <span className="pointer-events-none absolute right-[5px] top-[9px]"><Caret color="#000" /></span>
      {children}
    </span>
  );
}

function SelectRow({ id, label, value, children }) {
  return (
    <div className="flex items-center">
      <label htmlFor={id} className="w-[71px] shrink-0">{label}</label>
      <Select id={id} value={value} />
      {children}
    </div>
  );
}

function Check({ id, label, checked, gap = "gap-1" }) {
  return (
    <div className={"flex items-center " + gap}>
      <span className="relative flex h-[13px] w-[13px]">
        <input id={id} type="checkbox" defaultChecked={checked} className="peer h-[13px] w-[13px] appearance-none border border-[#8e8f8f] bg-linear-to-br from-[#cfd3d8] to-[#fbfbfb] shadow-[inset_0_0_0_1px_#f4f4f4]" />
        <span className="pointer-events-none absolute left-[2px] top-[2px] hidden peer-checked:block"><Svg w={9} h={9}><path d="M1 4.500l2.500 3.500L8 .5" stroke="#27408b" strokeWidth="2" /></Svg></span>
      </span>
      <label htmlFor={id}>{label}</label>
    </div>
  );
}

function Ticks() {
  return <div className="flex h-1 justify-between px-[5px]" aria-hidden="true">{Array.from({ length: 19 }, (_, i) => <span key={i} className="h-[3px] w-px bg-[#b9bbc0] first:h-1 last:h-1" />)}</div>;
}

const disabledBox = "h-[21px] min-w-0 flex-1 rounded-[1px] border border-[#abadb3] bg-[#f4f4f4] px-[3px]";

function RangeLimit({ id, label, value, pos }) {
  return (
    <div>
      <div className="flex items-center">
        <label htmlFor={id} className="w-[67px] shrink-0">{label}</label>
        <input id={id} type="text" readOnly defaultValue={value} className={disabledBox} />
      </div>
      <div className="flex h-[42px] flex-col justify-center">
        <Ticks />
        <input type="range" aria-label={label + " slider"} min="0" max="100" defaultValue={pos} className="h-[22px] w-full appearance-none bg-[linear-gradient(to_bottom,transparent_9px,#b4b6b9_9px,#b4b6b9_10px,#e8e8e8_10px,#e8e8e8_12px,transparent_12px)] bg-origin-content px-[5px] bg-clip-content [&::-webkit-slider-thumb]:h-[22px] [&::-webkit-slider-thumb]:w-[11px] [&::-webkit-slider-thumb]:appearance-none [&::-webkit-slider-thumb]:rounded-[1px] [&::-webkit-slider-thumb]:border [&::-webkit-slider-thumb]:border-[#b8b8b8] [&::-webkit-slider-thumb]:bg-[#f4f4f4] [&::-webkit-slider-runnable-track]:-mx-[5px]" />
        <Ticks />
      </div>
    </div>
  );
}

function RangeGroup({ name, label }) {
  return (
    <fieldset className="rounded-[3px] border border-[#d3dfe8] px-[9px]">
      <legend className="ml-[-4px] h-[17px] px-[7px] pr-2"><Check id={name} label={label} /></legend>
      <div className="pt-[5px]">
        <RangeLimit id={name + "-min"} label="Minimum:" value="1" pos="0" />
        <RangeLimit id={name + "-max"} label="Maximum:" value="1.99941" pos="100" />
      </div>
    </fieldset>
  );
}

function Settings() {
  const input = "h-[21px] w-full border border-[#e1e5ec] border-t-[#abadb3] bg-white px-1";
  return (
    <section className="flex w-[360px] shrink-0 flex-col border border-[#d0d2d6]">
      <div className="flex h-8 items-center justify-between pl-[7px] pr-1">
        <h2 className="pt-[5px] text-[19px] font-light text-[#39699f]">Surface</h2>
        <PanelButtons />
      </div>
      <button type="button" className="flex h-[25px] items-center gap-1 pb-[2px] pl-[6px]">{icons.plotSmall}Plot</button>
      <div className="flex min-h-0 flex-1">
        <div className="flex min-w-0 flex-1 flex-col overflow-hidden">
          <SectionHeader title="Data" />
          <div className="flex items-center px-[5px] pb-[11px] pt-[9px]">
            <label htmlFor="dataset" className="w-[55px] shrink-0">Data set:</label>
            <Select id="dataset" value="From parent" />
            <IconButton label="Go to source" icon={icons.goto} className="ml-2 h-[21px] w-[26px] rounded-[3px] border border-[#707070] bg-linear-to-b from-[#f4f4f4] to-[#d2d2d2]" />
          </div>
          <SectionHeader title="Expression" tall>
            <div className="flex items-center gap-[10px] pr-2">
              <IconButton label="Add expression" icon={icons.plus} />
              <IconButton label="Add options" icon={<Caret />} className="mr-[5px]" />
              <IconButton label="Replace expression" icon={icons.swap} />
              <IconButton label="Replace options" icon={<Caret />} />
            </div>
          </SectionHeader>
          <div className="flex flex-col gap-[5px] px-[5px] pb-[11px] pt-2 leading-[17px]">
            <label htmlFor="expr">Expression:</label>
            <input id="expr" type="text" defaultValue="u" className={input} />
            <label htmlFor="unit">Unit:</label>
            <Select id="unit" value="1" plain />
            <Check id="desc" label="Description:" gap="gap-[14px]" />
            <input type="text" aria-label="Description text" readOnly defaultValue="Dependent variable u" className="h-[21px] w-full border border-[#abadb3] bg-[#f4f4f4] px-1" />
          </div>
          <SectionHeader title="Title" closed />
          <div className="h-[2px] shrink-0" />
          <SectionHeader title="Range" />
          <div className="flex flex-col gap-[11px] px-[6px] pb-[13px] pt-3 leading-[17px]">
            <RangeGroup name="color-range" label="Manual color range" />
            <RangeGroup name="data-range" label="Manual data range" />
          </div>
          <SectionHeader title="Coloring and Style" />
          <div className="flex flex-col gap-[6px] px-[5px] pt-[9px]">
            <SelectRow id="coloring" label="Coloring:" value="Color table" />
            <SelectRow id="ctable" label="Color table:" value="Rainbow" />
          </div>
          <div className="grid auto-rows-[21px] items-center px-[5px] pb-[7px] pt-1">
            <Check id="legend-on" label="Color legend" checked />
            <Check id="reverse" label="Reverse color table" />
            <Check id="symmetrize" label="Symmetrize color range" />
            <Check id="wireframe" label="Wireframe" />
          </div>
          <SectionHeader title="Quality" />
          <div className="flex flex-col gap-[6px] px-[5px] pb-[11px] pt-[9px]">
            <SelectRow id="resolution" label="Resolution:" value="Normal" />
            <SelectRow id="smoothing" label="Smoothing:" value="Internal" />
            <SelectRow id="recover" label="Recover:" value="Off" />
          </div>
          <SectionHeader title="Inherit Style" closed />
        </div>
        <div className="flex w-4 shrink-0 flex-col items-center bg-[#efefef]" aria-hidden="true">
          <span className="flex h-[17px] items-center"><Svg w={6} h={4}><path d="M0 4h6L3 0z" fill="#777" /></Svg></span>
          <span className="flex w-[15px] flex-1 items-center justify-center rounded-[2px] border border-[#8f8f8f] bg-linear-to-r from-[#f5f5f5] to-[#c6c6c6]"><Svg w={7} h={8}><path d="M0 .5h7M0 3.500h7M0 6.500h7" stroke="#333" strokeWidth="1.500" /></Svg></span>
          <span className="flex h-8 items-center pt-3"><Svg w={6} h={4}><path d="M0 0h6L3 4z" fill="#777" /></Svg></span>
        </div>
      </div>
    </section>
  );
}

/* ---------- graphics ---------- */

function Graphics() {
  return (
    <section className="flex min-w-0 flex-1 flex-col">
      <div className="flex min-h-0 flex-1 flex-col border border-[#d0d2d6]">
        <div className="flex h-[29px] shrink-0 items-end border-b border-[#d0d2d6] pl-[5px] text-[12px]">
          <button type="button" className="-mb-px h-[24px] border border-b-0 border-[#d0d2d6] bg-[#fbfcff] px-[7px] pt-[2px] text-[#39699f]">Graphics</button>
          <button type="button" className="ml-[3px] flex h-[22px] items-center gap-1 bg-[#ebebeb] px-[6px] pt-px">Convergence Plot 1 <Svg w={9} h={9}><path d="M1 1l7 7M8 1L1 8" stroke="#888" strokeWidth="2" /></Svg></button>
          <div className="ml-auto self-center pr-[5px] pt-1"><PanelButtons /></div>
        </div>
        <div className="flex h-7 shrink-0 items-center gap-2 pl-[7px]">
          <IconButton label="Zoom in" icon={icons.zoomIn} />
          <IconButton label="Zoom out" icon={icons.zoomOut} />
          <IconButton label="Zoom box" icon={icons.zoomBox} />
          <IconButton label="Zoom extents" icon={icons.extents} />
          <span className="mx-[3px] h-4 w-px bg-[#d0d2d6]" />
          <IconButton label="Default view" icon={icons.views} />
          <IconButton label="View options" icon={<Caret />} />
          <span className="mx-[6px] h-4 w-px bg-[#d0d2d6]" />
          <IconButton label="Snapshot" icon={icons.camera} />
          <IconButton label="Print" icon={icons.print} />
        </div>
        <SurfacePlot />
      </div>
      <div className="mt-[5px] h-[2px] bg-[#d8dadd]" />
    </section>
  );
}

export default function App() {
  return (
    <div className="flex h-screen flex-col bg-black font-['Noto_Sans','Open_Sans',sans-serif] text-[11px] text-[#111]">
      <svg width="0" height="0" className="absolute" aria-hidden="true">
        <defs><linearGradient id="heat"><stop offset="0" stopColor="#ff1f4b" /><stop offset=".5" stopColor="#ff6a20" /><stop offset="1" stopColor="#ffb400" /></linearGradient></defs>
      </svg>
      <div className="m-px flex min-h-0 flex-1 flex-col rounded-t-[6px] border-b border-l border-r border-b-[#2bd0ea] border-l-[#e8f2fb] border-r-[#2bd0ea] bg-[linear-gradient(to_bottom,#9fb9d6_0,#b9d0ea_30px,#dbe7f4_118px,#b9d0ea_118px)] px-[6px] pb-[6px]">
        <TitleBar />
        <TabBar />
        <Ribbon />
        <main className="flex min-h-0 flex-1 gap-[6px] bg-[#fbfcff] px-1 pb-[5px] pt-1">
          <ModelBuilder />
          <Settings />
          <Graphics />
        </main>
        <footer className="flex h-[31px] shrink-0 items-center justify-end bg-[#f0edec] pr-[298px]">1.35 GB | 1.39 GB</footer>
      </div>
    </div>
  );
}
